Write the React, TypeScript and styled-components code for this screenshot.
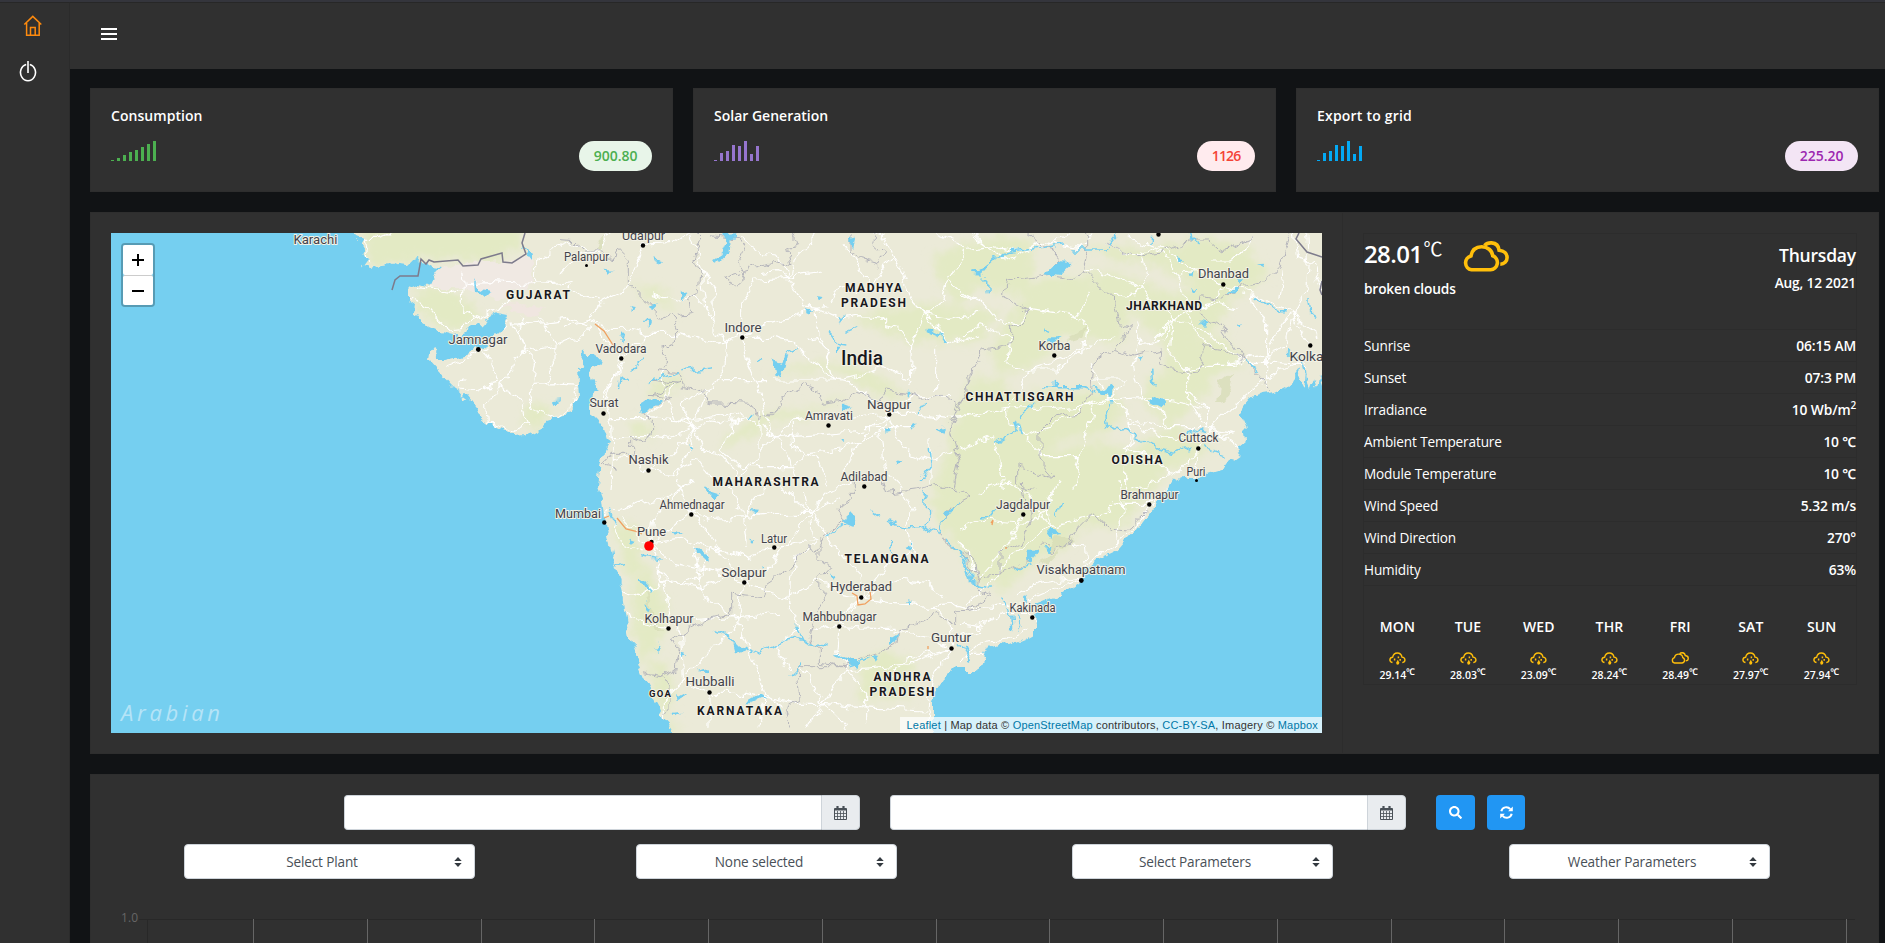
import React from "react";
import styled, { createGlobalStyle } from "styled-components";
import { FaSearch } from "react-icons/fa";

const GlobalStyle = createGlobalStyle`
  *, *::before, *::after { box-sizing: border-box; }
  body {
    margin: 0;
    background: #111315;
    color: #fff;
    font: 14px/20px "Open Sans", "Noto Sans", sans-serif;
    overflow: hidden;
  }
`;

const Page = styled.div`
  display: grid;
  grid-template-columns: 70px 1fr;
  height: 943px;
  overflow: hidden;
  border-top: 2px solid #34353c;
`;

const Sidebar = styled.nav`
  background: #303030;
  border-right: 1px solid #2b2b2b;
  border-top: 1px solid #272727;
  display: flex;
  flex-direction: column;
`;

const NavItem = styled.a<{ $indent: number; $gap: number }>`
  display: block;
  height: 22px;
  margin: ${(p) => p.$gap}px 0 0 ${(p) => p.$indent}px;
  svg { display: block; }
`;

const Main = styled.div`
  min-width: 0;
`;

const TopBar = styled.header`
  height: 67px;
  background: #303030;
  border-top: 1px solid #272727;
  padding: 25px 0 0 31px;
  svg { display: block; }
`;

const Content = styled.main`
  padding: 19px 6px 0 20px;
  display: flex;
  flex-direction: column;
  gap: 20px;
`;

const CardRow = styled.section`
  display: grid;
  grid-template-columns: repeat(3, 1fr);
  gap: 20px;
`;

const Card = styled.article`
  height: 104px;
  background: #303030;
  border: 1px solid #2e2e2e;
  padding: 17px 20px;
`;

const CardTitle = styled.h4<{ $tracking: number }>`
  margin: 0;
  font-size: 14px;
  font-weight: 600;
  line-height: 20px;
  letter-spacing: ${(p) => p.$tracking}px;
`;

const CardBody = styled.div`
  display: flex;
  justify-content: space-between;
  align-items: flex-start;
  margin-top: 15px;
`;

const Bars = styled.div<{ $color: string }>`
  display: flex;
  align-items: flex-end;
  gap: 3px;
  height: 20px;
  color: ${(p) => p.$color};
`;

const Bar = styled.i<{ $h: number }>`
  width: 3px;
  height: ${(p) => p.$h}px;
  background: currentColor;
`;

const Pill = styled.span<{ $bg: string; $fg: string; $tracking: number }>`
  height: 30px;
  line-height: 30px;
  padding: 0 14.5px;
  border-radius: 15px;
  background: ${(p) => p.$bg};
  color: ${(p) => p.$fg};
  font-weight: 600;
  font-size: 14px;
  letter-spacing: ${(p) => p.$tracking}px;
`;

const MapPanel = styled.section`
  display: grid;
  grid-template-columns: 1252px 1fr;
  height: 542px;
  background: #303030;
  border: 1px solid #2e2e2e;
`;

const MapColumn = styled.div`
  padding: 20px;
  border-right: 1px solid #2c2c2c;
`;

const MapFrame = styled.div`
  position: relative;
  width: 1211px;
  height: 500px;
  overflow: hidden;
  background: #75cff0;
  > svg { display: block; }
`;

const ZoomControl = styled.div`
  position: absolute;
  left: 10px;
  top: 10px;
  border: 2px solid rgba(0, 0, 0, 0.25);
  border-radius: 4px;
  background-clip: padding-box;
`;

const ZoomButton = styled.button`
  display: grid;
  place-items: center;
  width: 30px;
  height: 30px;
  padding: 0;
  border: 0;
  background: #fff;
  border-radius: 2px;
  & + & { border-top: 1px solid #ccc; }
`;

const Attribution = styled.div`
  position: absolute;
  right: 0;
  bottom: 0;
  height: 16px;
  width: 422px;
  padding: 0 4px;
  background: rgba(255, 255, 255, 0.7);
  color: #333;
  font: 11px/16px "Liberation Sans", Arial, sans-serif;
  letter-spacing: 0.19px;
  display: flex;
  justify-content: flex-end;
  white-space: pre;
  b { font-weight: 400; color: #0078a8; }
`;

const Weather = styled.div`
  padding: 20px 21px 0 20px;
`;

const WeatherTable = styled.div`
  border: 1px solid #2c2c2c;
  height: 452px;
`;

const Now = styled.div`
  display: flex;
  justify-content: space-between;
  height: 96px;
  border-bottom: 1px solid #2c2c2c;
`;

const NowTop = styled.div`
  display: flex;
  height: 45px;
  padding-top: 6px;
  svg { margin: 1px 0 0 20px; }
`;

const Temp = styled.span`
  font-size: 24px;
  font-weight: 600;
  line-height: 27px;
  letter-spacing: -0.6px;
`;

const TempUnit = styled.span`
  font-size: 19px;
  line-height: 15px;
  font-family: "Noto Sans CJK SC", sans-serif;
  margin-left: 1px;
`;

const Strong = styled.div`
  font-size: 13.7px;
  font-weight: 600;
  line-height: 20px;
  letter-spacing: -0.15px;
`;

const DateBox = styled.div`
  text-align: right;
  padding-top: 11px;
`;

const Weekday = styled.div`
  font-size: 17.5px;
  font-weight: 600;
  line-height: 20px;
  letter-spacing: -0.2px;
  margin-bottom: 8px;
`;

const Row = styled.div`
  display: flex;
  justify-content: space-between;
  height: 32px;
  line-height: 32px;
  font-size: 13.6px;
  letter-spacing: -0.14px;
  border-bottom: 1px solid #2c2c2c;
  strong { font-weight: 600; font-size: 13.8px; }
  sup { font-size: 10px; line-height: 0; }
`;

const Forecast = styled.div`
  display: grid;
  grid-template-columns: repeat(7, 1fr);
  padding-top: 31px;
  margin: 0 -1px 0 -2px;
`;

const Day = styled.div`
  display: flex;
  flex-direction: column;
  align-items: center;
  font-weight: 600;
  font-size: 14px;
  letter-spacing: 0.15px;
`;

const DayIcon = styled.div`
  height: 13px;
  margin-top: 15px;
  svg { display: block; }
`;

const DayTemp = styled.span`
  font-size: 10.5px;
  line-height: 14px;
  margin-top: 3px;
  letter-spacing: 0;
  white-space: nowrap;
  sup { font-size: 9px; line-height: 0; }
`;

const FilterPanel = styled.section`
  height: 300px;
  background: #303030;
  border: 1px solid #2e2e2e;
  padding-top: 20px;
`;

const DateRow = styled.div`
  display: flex;
  padding-left: 253px;
  height: 35px;
`;

const DateGroup = styled.div`
  display: flex;
  width: 516px;
  margin-right: 30px;
`;

const DateInput = styled.input`
  flex: 1;
  min-width: 0;
  border: 1px solid #ced4da;
  border-right: 0;
  border-radius: 4px 0 0 4px;
  background: #fff;
`;

const DateAddon = styled.span`
  display: grid;
  place-items: center;
  width: 39px;
  border: 1px solid #ced4da;
  border-radius: 0 4px 4px 0;
  background: #e9ecef;
`;

const ActionButton = styled.button<{ $w: number }>`
  display: grid;
  place-items: center;
  width: ${(p) => p.$w}px;
  height: 35px;
  padding: 0;
  margin-right: 12px;
  border: 0;
  border-radius: 4px;
  background: #2196f3;
  color: #fff;
`;

const SelectRow = styled.div`
  display: flex;
  margin-top: 14px;
  padding-left: 93px;
`;

const Select = styled.button<{ $w: number; $gap: number }>`
  display: flex;
  align-items: center;
  width: ${(p) => p.$w}px;
  height: 35px;
  margin-right: ${(p) => p.$gap}px;
  padding: 0 12px;
  border: 1px solid #ced4da;
  border-radius: 4px;
  background: #fff;
  color: #495057;
  font: 13.6px/20px "Open Sans", sans-serif;
  letter-spacing: -0.15px;
  span { flex: 1; text-align: center; padding-right: 7px; }
`;

const ChartArea = styled.div`
  margin: 30px 0 0 28px;
  svg { display: block; }
`;

const HomeIcon = () => (
  <svg width="20" height="22" viewBox="0 0 20 22" fill="none" stroke="#fd8a0e" strokeWidth="1.5">
    <path d="M1.3 9.5 9.8 1.4l8.5 8.1M3.600 8v12.300h12.600V8M7.500 20V12.600h4.700V20" />
  </svg>
);

const PowerIcon = () => (
  <svg width="18" height="22" viewBox="0 0 18 22" fill="none" stroke="#fff" strokeWidth="1.600">
    <path d="M9 0v12M7.200 3.400a7.500 8.300 0 1 0 3.600 0" />
  </svg>
);

const MenuIcon = () => (
  <svg width="16" height="13" viewBox="0 0 16 13" fill="#fff">
    <path d="M0 0h16v2H0zM0 5h16v2H0zM0 10h16v2H0z" />
  </svg>
);

const CloudsIcon = ({ size, weight }: { size: number; weight: number }) => (
  <svg width={size} height={(size * 31) / 47} viewBox="0 0 47 31" fill="none" stroke="#ffbf0b" strokeWidth={weight}>
    <path d="M9.500 28.800h19a7.300 7.300 0 0 0 2.200-14.100C30 9.500 25.700 5.700 19.700 5.700c-6 0-9.700 3.700-10.700 9.200A7.100 7.100 0 0 0 9.500 28.800z" />
    <path d="M22.500 4.600C24.500 2.400 26.500 1.700 29.600 1.900c4.400.4 7.100 3.300 7.500 7.300 5 .6 8 3.600 8 7.300s-2.900 6.700-6.800 6.700" />
  </svg>
);

const RainIcon = () => (
  <svg width="17" height="13" viewBox="0 0 17 13" fill="none" stroke="#ffbf0b" strokeWidth="1.400">
    <path d="M3.500 10.500C-.4 9.600.5 5.400 3.700 5.200 4.200 2.400 6 1 8.300 1c2.600 0 4.300 1.700 4.700 4.100 3.600.3 4.100 4.800.3 5.500" />
    <path d="M5.600 6.600v1.900M9.400 4.600v1.600M11.200 7v1.700" strokeWidth="1.500" />
    <path d="M8.800 7.800 7.200 10.500q-.2 2.200 1.600 2.200 1.700-.1 1.500-2.200z" fill="#ffbf0b" stroke="none" />
  </svg>
);

const CalendarIcon = () => (
  <svg width="13" height="14" viewBox="0 0 13 14" fill="none" stroke="#495057">
    <path d="M.5 2.500h12v11H.5z" />
    <path d="M.5 3.700h12" strokeWidth="1.600" />
    <path d="M3.500 5v8.500M6.500 5v8.500M9.500 5v8.500M.5 7.500h12M.5 10.500h12" strokeWidth=".8" />
    <path d="M3.500 0v4M9.500 0v4" strokeWidth="2.200" />
  </svg>
);

const RefreshIcon = () => (
  <svg width="13" height="13" viewBox="0 0 13 13" fill="none" stroke="#fff" strokeWidth="2">
    <path d="M1.300 5.200A5.100 5.100 0 0 1 10.300 3.200M11.700 7.800A5.100 5.100 0 0 1 2.700 9.800" />
    <path d="M12.800.6v4.700H8.100zM.2 12.400V7.700h4.700z" fill="#fff" stroke="none" />
  </svg>
);

const CaretIcon = () => (
  <svg width="8" height="10" viewBox="0 0 8 10" fill="#343a40">
    <path d="M4 0 7.700 4H.3zM4 10 .3 6h7.400z" />
  </svg>
);

type Label = [text: string, x: number, y: number, width: number, kind: "city" | "state" | "country"];

const labels: Label[] = [
  ["Karachi", 315.5, 243.5, 44, "city"],
  ["Udaipur", 643.5, 239.5, 43, "city"],
  ["Palanpur", 586.5, 260.5, 45, "city"],
  ["Jamnagar", 478, 343.5, 59, "city"],
  ["Vadodara", 621, 353, 51, "city"],
  ["Indore", 743, 331.5, 37, "city"],
  ["Surat", 604, 407, 29, "city"],
  ["Nashik", 648.5, 463.5, 40, "city"],
  ["Amravati", 829, 419.5, 48, "city"],
  ["Nagpur", 889, 408.5, 44, "city"],
  ["Adilabad", 864, 480.5, 47, "city"],
  ["Ahmednagar", 692, 509, 65, "city"],
  ["Mumbai", 578, 518, 46, "city"],
  ["Pune", 651.5, 535.5, 29, "city"],
  ["Latur", 774, 542.5, 26, "city"],
  ["Solapur", 744, 576.5, 45, "city"],
  ["Hyderabad", 861, 591, 62, "city"],
  ["Mahbubnagar", 839.5, 621, 74, "city"],
  ["Kolhapur", 669, 623, 49, "city"],
  ["Hubballi", 710, 686, 49, "city"],
  ["Guntur", 951, 641.5, 40, "city"],
  ["Kakinada", 1032.5, 612, 46, "city"],
  ["Visakhapatnam", 1081, 573.5, 89, "city"],
  ["Jagdalpur", 1023, 509, 54, "city"],
  ["Brahmapur", 1149.5, 499, 58, "city"],
  ["Puri", 1196, 475.5, 19, "city"],
  ["Cuttack", 1198.5, 442, 40, "city"],
  ["Korba", 1054.5, 350, 32, "city"],
  ["Dhanbad", 1223.5, 278, 51, "city"],
  ["Kolkata", 1312.5, 360.5, 46, "city"],
  ["GUJARAT", 538, 298.5, 64, "state"],
  ["MADHYA", 873.5, 292, 57, "state"],
  ["PRADESH", 873.5, 307, 65, "state"],
  ["MAHARASHTRA", 765.5, 486, 106, "state"],
  ["TELANGANA", 886.5, 563, 84, "state"],
  ["ANDHRA", 902, 681, 57, "state"],
  ["PRADESH", 902, 696, 65, "state"],
  ["KARNATAKA", 739.5, 715, 85, "state"],
  ["GOA", 660, 697, 22, "state"],
  ["CHHATTISGARH", 1019.5, 400.5, 108, "state"],
  ["JHARKHAND", 1164, 309.5, 76, "state"],
  ["ODISHA", 1137, 463.5, 51, "state"],
  ["India", 862, 364.5, 42, "country"],
];

const cities: [number, number, number?][] = [
  [586.5, 265.5, 1.5], [643, 245.5], [478.3, 349.5, 2.4], [621.3, 358.5], [742.3, 337.5],
  [603.5, 413.5], [648.5, 470.5], [828.5, 425.5], [889.3, 414.5], [864.3, 486.5],
  [691.3, 514.5], [604.3, 522.5], [651.5, 542], [774.3, 547.5], [744.3, 582.5],
  [861.3, 597.5], [839.3, 626.5], [668.5, 628.5], [709.5, 692.5], [951.5, 648.5],
  [1032.3, 617.5], [1081.3, 580.5, 2.4], [1023.3, 514.5], [1149.3, 504.5],
  [1196.5, 480.5, 1.5], [1198.3, 448.5], [1054.3, 355.5], [1223.3, 284.5],
  [1310.3, 345.5], [1158.5, 234.5],
];

const LAND =
  "M353 215V233L363 237 358 243 364 253 367 259 361 267 370 269 376 265 387 263 393 266 400 262 407 263 412 258 417 257 421 262 428 263 434 267 441 268 438 275 434 279 431 286 420 283 413 286 408 291 408 300 415 305 414 312 420 320 428 327 440 332 453 335 463 333 470 330 478 327 483 323 487 317 497 313 508 315 504 323 502 330 494 338 483 346 475 350 470 353 457 357 445 360 439 360 436 353 432 350 429 354 428 360 437 370 453 387 462 393 477 412 487 421 497 428 513 435 522 434 530 431 543 424 550 422 561 415 570 412 575 402 579 397 578 384 577 371 582 363 583 350 587 355 597 355 602 363 592 367 591 377 595 387 600 391 594 395 593 405 591 413 597 419 603 427 608 443 603 453 600 467 598 487 603 500 605 517 608 533 612 553 618 573 623 593 628 627 632 647 640 668 648 687 657 703 663 717 670 725 675 733V745H933V700L936 690 944 677 953 668 967 668V674H975L976 668 980 663 985 651 998 645 1010 646 1025 640 1036 634V623L1032 613 1035 605 1060 595 1078 583 1087 570 1098 560 1118 551 1137 530 1152 510 1167 490 1173 479 1182 475 1188 478 1200 478 1220 472 1229 460 1239 453 1238 447 1248 438 1246 426 1241 414 1243 407 1251 398 1263 394 1277 392 1287 387 1293 382 1302 370 1300 382 1304 390 1306 371 1310 390 1314 378 1317 388 1319 376 1323 388H1335V215Z";

const GREENS =
  "M364 225H520L521 251 505 252 494 263 470 260 420 258 400 262 366 265ZM415 290L445 288 468 301 480 318 464 330 435 326 417 309ZM522 425L528 405 542 404 557 413 532 429ZM630 284L658 287 681 313 656 302ZM648 385L682 373 679 389 650 397ZM631 420L650 424 655 438 631 434ZM650 660L666 662 675 690 667 733H682L655 701ZM630 590L647 565 667 603 660 643 640 667ZM612 520L635 526 643 570 627 580ZM718 450Q747 405 820 408 820 400 847 395L809 418 775 421 741 441ZM767 373Q800 360 860 365L910 398 888 400 836 371ZM853 320Q908 294 975 310L1000 310 980 342 912 343ZM930 258Q987 228 1032 241L1032 301 983 286 954 306ZM971 378L1003 380 1022 410 985 443 952 477 950 510 933 485 949 450 957 411ZM1032 285Q1082 260 1132 303L1119 345 1062 335 1040 362 1001 377 988 350ZM1084 270L1118 272 1174 295 1215 280 1234 298 1214 332 1168 350 1120 300ZM1170 345L1225 335 1243 365 1205 375 1165 371ZM1150 377L1180 370 1225 364 1200 400 1172 427 1140 400ZM1024 470Q1080 428 1132 450L1170 425 1214 450 1172 468 1120 527 1080 527 1065 551 1032 560 1007 590 974 581 962 540 981 487ZM928 498L975 480 1025 495 1062 477 1058 514 1033 566 1006 577 980 574 948 537ZM862 661L883 650 913 662 911 699 858 701ZM1087 244L1151 249 1209 237 1253 253 1270 275 1240 295 1192 285 1158 266 1110 260ZM948 430L990 404 1040 390 1110 390 1125 408 1110 434 1060 440 1040 465 1005 505 955 520Z";

const MapArt = () => (
  <svg width="1211" height="500" viewBox="111 233 1211 500">
    <defs>
      <clipPath id="land"><path d={LAND} /></clipPath>
      <filter id="soft"><feGaussianBlur stdDeviation="4" /></filter>
      <filter id="jagged" filterUnits="userSpaceOnUse" x="100" y="215" width="1240" height="535" colorInterpolationFilters="sRGB">
        <feTurbulence type="fractalNoise" baseFrequency="0.075" numOctaves="3" seed="4" result="noise" />
        <feDisplacementMap in="SourceGraphic" in2="noise" scale="13" xChannelSelector="R" yChannelSelector="G" />
      </filter>
    </defs>
    <g filter="url(#jagged)">
      <path d={LAND} fill="#ebead8" />
      <g clipPath="url(#land)">
        <path d={GREENS} fill="#e3eac4" filter="url(#soft)" />
        <path d="M441 270 470 262 532 258 534 284 500 300 460 287 430 287Z" fill="#f0e9e3" />
        <path d="M505 304 545 307 540 315 510 312Z" fill="#f0e6e0" />
        <g fill="#d5dbb5" opacity=".7">
          <path d="M598 240 606 239 601 250 595 249ZM1220 385 1234 373 1227 399 1218 403ZM1056 533 1075 539 1061 551 1047 552ZM1040 560 1060 552 1045 568ZM643 590 651 604 660 632 655 632ZM1075 333 1090 326 1084 339 1068 344ZM970 580 985 574 979 584Z" />
        </g>

        <g fill="none" stroke="#fff" strokeWidth="3.4" strokeLinejoin="round">
          <g transform="translate(100 220) scale(.33333)">
            <path d="M790 52H845L880 38M790 52 800 130M960 200 1000 205 1050 215 1085 210M925 235 965 250 1000 290 1045 330 1090 325 1135 295 1195 265 1250 230M1085 155 1090 190 1085 270 1135 295M1090 188 1180 185 1260 190 1310 188 1360 190 1420 185 1410 205 1450 230 1500 240M1310 188 1310 130 1360 90 1410 70 1500 100M1235 300 1275 395 1240 410 1235 450 1200 500 1160 550 1165 600 1195 625M1235 305 1310 310 1400 298 1465 315M1275 395 1370 375 1440 350 1470 320M1275 395 1310 425 1300 490 1285 520 1300 570 1370 595 1420 550 1430 495M1040 440 1090 420 1145 388 1175 425 1195 490 1150 500 1120 515 1080 510 1085 480 1100 480M1145 388 1160 380 1200 330 1225 300M1270 290 1250 335 1280 400M1300 490 1365 488 1430 493M1365 375 1365 430 1335 488M1200 500 1260 530 1275 590 1290 620M1320 290 1340 330 1370 375M1165 600 1230 635 1290 610" />
          </g>
          <g transform="translate(560 220) scale(.33333)">
            <path d="M0 165 60 100 120 90 150 40M90 300 0 325M90 300 130 240 210 200 250 75 340 70 380 40M90 300 150 325 195 325 260 340 350 340 480 370M95 300 140 365 180 400 185 415 155 490 130 570M185 415 230 370 260 340M385 40 390 60 405 80 430 160 440 260 465 310 465 330 500 365 545 350 595 320 690 295 770 265 800 260M270 220 360 240 400 230 440 265M545 352 545 250 590 180 690 175 720 160 790 150M545 352 560 420 600 510 620 590 645 650M545 355 640 355 700 370 760 430 820 480M470 370 500 365 495 440 460 500 430 540 400 620 380 700 345 780M465 310 460 200 430 160M600 160 650 155 690 175 730 260 770 265M690 175 650 105 600 100 540 50M690 175 700 120 770 40M855 70 890 130 935 195 970 140 1000 110 975 60 935 40M1000 110 1030 160 1055 240 1095 285 1140 250 1165 180 1220 110 1180 60 1130 40M1165 180 1210 220 1260 240M1095 285 1170 295 1260 280M935 195 890 220 840 190 810 250M980 295 980 320 1020 330 1055 370 1050 500M980 295 900 290 845 300 770 265M1055 370 1095 290M1095 285 1140 330 1165 375 1210 360 1260 345M1130 380 1130 510M480 485 615 485M645 480 820 480 905 465 970 440 1055 480M820 480 870 490 940 540 985 580 1060 530 1170 520M820 480 800 400 770 350 740 355M770 265 780 340 820 480M155 490 130 540 155 620 160 720 150 810M155 490 190 425M145 590 260 590 400 600 510 580 575 600 640 640M260 590 320 530 345 500M400 620 360 555 390 530 450 510M400 620 340 590 310 500 310 450M400 620 450 600 520 610 570 590M150 650 260 650 310 655 400 620M265 750 320 720 380 660 400 620M265 750 190 710 160 720M265 750 330 760 410 720 460 790 520 810M400 620 430 690 490 710 540 770 600 700 650 650 700 600 780 590 840 600 985 582M510 580 520 640 480 690 540 740 600 740 700 740 750 700 850 690 960 640M640 650 690 710 710 790M600 570 600 690M640 650 800 640 920 630M700 600 700 680 770 720 800 790M985 580 940 620 880 690 850 770M985 580 1060 580 1170 595 1260 590M985 580 960 650 970 740 1030 800M985 580 1030 690 1110 720 1180 690M1110 660 1110 790M915 620 1060 620" />
          </g>
          <g transform="translate(960 220) scale(.33333)">
            <path d="M0 90 90 80 180 95 250 65 360 85 400 40M0 220 70 250 110 300 170 310 210 265 300 280 345 290 380 250 395 210M90 85 40 40M40 50 90 85 140 120 210 90 280 65 330 40M370 145 440 160 540 200 640 300 740 330 850 430M430 65 520 110 600 80 700 150 790 195 880 220 990 280 1050 375M790 195 740 260 690 270 640 300 580 360M690 270 760 250 840 270M545 90 560 160 530 220 460 230M500 50 600 90 650 165 680 250 700 330 760 390M650 165 730 160 790 195M880 40 860 90 810 120 750 120M1040 40 1045 120 1040 210 1000 280 980 380 930 400 800 430M990 280 940 350 920 410 920 510M860 430 950 430 1040 440M990 280 1080 350M1000 40 1010 120 1060 130 1085 210M970 150 960 240M880 220 885 260 920 310 920 400M0 350 60 320 150 350 140 430 200 450 290 450 370 385 460 350M345 290 390 320 385 370 300 420 210 450 145 560M145 565 60 580 0 590M145 565 260 570 380 560 450 540 530 530 640 540 740 570M145 565 150 610 195 645 330 590 400 545 455 535 500 480 390 480M195 650 250 710 360 710 390 610 400 555M360 710 345 800M0 690 100 650M100 650 120 730 130 810M450 540 520 600 600 620 690 620 755 620 830 550 890 500 950 450 1040 430M450 540 390 430M500 600 600 650 700 660 830 640M500 600 520 660 490 685 560 700 640 770M515 640 500 700 500 810M540 360 520 440 540 530 610 580 620 620M640 300 630 400 680 450 740 430 830 430M680 450 680 530 750 630 820 640M530 310 545 370 610 360 640 300M740 570 680 510M740 570 740 620M715 685 755 620M715 690 650 760 520 810M715 685 705 770M755 620 840 690 840 700" />
          </g>
          <g transform="translate(560 480) scale(.33333)">
            <path d="M135 100 180 90 240 70 300 60 350 30 400 0M180 110 240 170 275 190 370 180 450 200 560 230 650 200 770 180M275 190 300 270 330 400 365 460 370 600 450 640 560 640 700 670M275 190 340 250 450 270 550 305 630 260 680 190 750 100 740 30M275 190 280 120 345 40 400 0M395 100 450 120 550 110 640 100 750 100 840 50M395 100 440 150 480 210 550 305M395 100 340 140 275 190M395 100 350 0M550 305 530 420 590 560 610 640 670 680M550 305 680 355 720 440 650 500 690 570M450 200 420 290 340 310 290 260M160 120 190 200 250 220M160 330 230 350 320 300 430 320 520 280M325 445 210 420 200 390M325 445 370 420 530 410 660 400M530 415 430 350 400 200M530 430 460 510 375 590M680 355 770 300 850 340 900 350 1000 370 1120 380 1190 370 1260 390M905 350 970 270 1060 210 1040 140 1060 90 1020 20M905 350 840 430 750 450M838 440 930 445 1010 445M838 440 830 510 860 570 920 640 920 730M905 350 900 290 820 200 760 100M905 350 1010 300 1100 310 1160 350M905 350 850 400 850 430M1120 380 1170 420 1175 505 1060 550 860 570 790 670 740 740M1175 505 1040 540 980 600M1175 505 1110 470 1000 450M1175 505 1200 470 1260 450M1175 505 1110 610 1100 740M700 670 790 670 900 680 1100 690M610 640 600 740M450 640 450 740M370 600 310 660 310 720M790 670 760 620 720 560M790 670 860 740M750 100 800 40 880 0M750 100 700 60 640 0M750 100 760 190 700 240 690 360M550 110 500 0M640 0 550 110 560 200" />
          </g>
          <g transform="translate(960 480) scale(.33333)">
            <path d="M145 0 200 40 265 140 340 120 420 100 480 70 570 70M265 140 260 70 300 0M265 140 190 200 130 250 110 295 10 375M0 150 60 120 200 130 260 100M190 105 130 210 60 290M0 375 130 380 190 370 280 330 365 290 380 250 460 200 530 140 560 90 640 10M165 350 240 310 300 300 365 290M0 430 60 440 130 400 200 400 225 425M0 540 50 490 140 480 210 450M0 190 40 250 50 290M340 185 370 200 375 250M470 200 465 150 490 100 480 0M55 40 150 0M10 520 70 520" />
          </g>
        </g>

        <g fill="none" stroke="#b4b4bb" strokeWidth="3" strokeLinejoin="round">
          <path transform="translate(560 220) scale(.33333)" d="M0 62 40 65 70 90 130 90 160 120 175 90 205 120 205 190 240 220 270 250 310 290 330 285 350 330 345 370 300 385 320 420 300 450 355 455 370 500 430 515 450 545 580 550 590 595 630 590 665 530 740 495 775 510 780 550 830 545 895 520 960 540 980 510 1040 520 1080 535 1150 520 1195 560 1225 520 1220 470 1260 430M400 40 420 60 400 120 425 160 420 220 380 240 390 280 345 290M455 50 535 60 550 90 530 130 555 170 525 195 495 175 590 140 640 125 690 140 680 80 710 70 700 40M870 40 870 90 895 120 950 135 975 100 940 70 950 40M270 480 360 490 270 520 335 530 250 570 285 620 260 670 215 650 215 700 150 700 130 735 180 745M1195 560 1170 630 1200 720 1180 810" />
          <path transform="translate(960 220) scale(.33333)" d="M200 40 240 75 290 90 285 160 140 180 130 230 210 270 180 310 155 320 155 370 70 390 30 470 0 570M380 40 380 100 370 150 345 180 285 170M370 150 420 200 460 240 480 310 515 320 460 385 400 430 390 520 360 580 280 590 240 630 240 720 285 770 170 740 170 790 220 810M430 65 480 90 530 110 600 100 690 60 740 60 780 95 870 60 880 40M990 40 960 140 920 180 850 200 780 240 720 230 715 280 790 330 850 420 900 470 935 510M460 385 520 405 605 390 600 440 640 450 710 460 735 380 790 390 850 420" />
          <path transform="translate(560 480) scale(.33333)" d="M965 0 980 40 1060 30 1140 10 1230 50 1170 80 1140 150 1160 190 1215 230 1260 300M880 0 880 50 830 90 850 120 790 170 770 210 740 200 680 270 620 310 610 350 515 340 515 400 430 420 340 470 360 520 350 570 300 590 255 580M780 170 780 240 815 260 770 310 800 340 770 390 750 480 775 500 775 550 850 560 1010 500 1015 460 1120 400 1190 430 1190 390 1260 380M310 590 330 620 330 690 310 700M845 560 710 560 720 660 675 690 690 740" />
          <path transform="translate(960 480) scale(.33333)" d="M190 0 195 50 215 110 180 190 120 220 120 285 65 290 55 330 90 350 0 390M0 215 45 240 50 290M120 285 190 250 260 180 275 220 330 190 350 150 405 95 450 145 500 150 560 95" />
        </g>
        <g fill="none" stroke="#75cff0" strokeWidth="4.500">
          <path transform="translate(560 220) scale(.33333)" d="M260 485 355 455M370 455 455 443M220 460 235 430 255 420M175 495 180 470 200 480M590 425 610 415M670 430 680 395 710 385M810 340 830 370 865 375M850 340 895 320M1070 580 1095 545M1080 785 1110 740 1105 690M1140 340 1160 368M185 375 192 347M560 595 580 580" />
          <path transform="translate(960 220) scale(.33333)" d="M35 155 90 135 130 100 260 80 315 75M340 90 435 90 475 40M60 165 80 185 82 220M250 500 370 500 400 510M283 500 283 470M180 600 195 570 215 545M105 670 155 640 170 615 178 640M455 540 435 590 440 620 465 630 500 625 520 650 600 690 640 700 685 685M730 685 790 705M675 640 700 625 735 635M890 230 950 275 975 275M855 425 900 460M1050 240 1055 280 1070 290M575 455 578 490 590 495M680 40 725 75M570 75 572 50M250 330 270 340M985 390 1030 430 1035 460" />
          <path transform="translate(560 480) scale(.33333)" d="M465 460 540 495 600 520 640 500 700 470 750 485 800 495M710 440 730 480M800 170 860 125M990 120 1030 140 1090 140 1105 130 1100 50 1085 30M1090 140 1140 160 1155 110 1190 65M1160 180 1215 235 1235 310 1260 315M830 520 870 560 950 535M690 585 725 550M165 265 195 250M985 195 1000 220M1210 490 1235 545M250 230 305 240M930 90 960 110M150 90 165 130" />
          <path transform="translate(960 480) scale(.33333)" d="M0 230 35 270 35 310 90 325M60 110 85 110 105 85M290 110 305 60M155 270 215 250M130 350 150 390 155 445M165 410 185 445M0 490 35 540M200 240 230 210" />
        </g>
        <g fill="#75cff0">
          <path transform="translate(560 220) scale(.33333)" d="M480 43 520 40 515 90 480 130 460 120 490 100 505 65ZM630 415 665 425 685 400 675 450 650 470 645 440ZM365 215 380 210 370 240ZM240 560 265 540 305 535 265 575 238 578ZM250 305 270 305 265 320ZM283 118 300 123 290 134ZM130 152 158 155 145 167ZM265 260 300 250 280 270ZM208 258 228 262 217 272ZM865 45 885 60 878 88ZM1100 320 1120 320 1120 340 1150 350 1135 355 1100 340ZM825 380 845 380 825 405ZM765 232 782 233 770 250ZM835 292 855 293 843 308ZM743 268 760 272 750 282ZM1133 625 1152 620 1142 640ZM1050 622 1070 613 1060 630ZM978 615 990 624 980 640ZM376 672 395 680 385 692ZM1008 718 1024 722 1013 737ZM843 653 860 662 850 672ZM845 550 868 558 850 572ZM1043 513 1052 522 1043 535ZM1230 155 1260 145V158Z" />
          <path transform="translate(960 220) scale(.33333)" d="M265 160 290 130 335 132 300 165ZM35 155 90 135 85 150ZM255 355 300 355 275 370ZM395 495 430 510 460 500 455 535 420 520ZM570 545 590 528 615 540 605 565ZM720 300 748 305 738 315ZM815 315 840 310 830 322ZM530 408 552 412 545 422ZM650 108 672 115 660 122ZM900 133 917 131 910 149ZM825 178 852 178 843 197ZM795 220 830 205 835 215ZM690 168 704 164 700 180ZM693 196 712 199 703 212ZM640 790 665 765 675 775 650 810H620Z" />
          <path transform="translate(560 480) scale(.33333)" d="M432 25 480 40 465 58ZM568 93 597 95 590 105ZM400 210 420 215 455 235 455 248 420 232ZM240 285 265 310 265 345 250 320ZM255 370 275 380 265 387ZM208 176 228 183 215 192ZM343 146 364 160 350 164ZM570 173 592 178 582 185ZM520 490 555 495 545 510 527 515ZM610 245 625 260 612 257ZM990 470 1015 455 1005 498 990 500ZM830 525 870 540 900 540 900 560 870 555ZM943 525 962 528 950 545ZM845 120 870 103 888 120 880 135ZM808 272 833 290 825 300ZM558 670 600 645 615 655 580 670ZM345 643 372 655 350 667ZM365 520 385 525 370 537ZM405 576 447 568 447 580ZM338 702 367 698 348 712ZM278 500 300 497 290 509ZM1035 205 1058 193 1050 210ZM1038 363 1052 370 1045 377Z" />
          <path transform="translate(960 480) scale(.33333)" d="M265 145 303 155 280 160 283 170 265 165ZM255 195 275 195 270 215 260 215ZM210 215 230 215 205 248ZM185 358 204 350 195 365Z" />
          <path d="M486 317 497 313 506 315 501 323 490 328 484 322ZM472 278 478 290 492 293 485 300 473 290ZM523 245 533 255 532 262 525 253ZM553 400 563 399 555 404Z" />
        </g>
      </g>
    </g>
    <g fill="none" stroke="#7d7b8c" strokeWidth="1.500">
      <path d="M392 290 395 280 400 276 418 276 421 259 426 264 429 260 434 262 458 260 463 266 478 265 481 259 502 253 503 262 512 263 526 254 522 243 525 233M1299 233 1296 239 1307 252 1322 257" />
      <path d="M1322 281 1320 290 1322 295" />
    </g>
    <g fill="none" stroke="#f0a060" strokeWidth="1.300">
      <path d="M595 324 604 331 613 345M617 518 626 529 635 531 642 534M852 593 857 596 858 605 865 604 871 599 870 591M604 518 609 516M991 523 993 520 992 525M928 646V649M1006 549V547" />
    </g>
    {cities.map(([x, y, r = 2.2], i) => <circle key={i} cx={x} cy={y} r={r} fill="#000" />)}
    <circle cx="649" cy="546" r="4.800" fill="#f00" />
    {labels.map(([text, x, y, w, kind], i) => (
      <text
        key={i}
        x={x}
        y={y}
        textAnchor="middle"
        textLength={w}
        lengthAdjust={kind === "state" ? "spacing" : "spacingAndGlyphs"}
        fontFamily="Roboto, sans-serif"
        fontSize={kind === "country" ? 20 : kind === "state" ? (w < 25 ? 9.5 : 12) : w / text.length < 5.9 ? 12.5 : 13.5}
        fontWeight={kind === "state" ? 700 : kind === "country" ? 500 : 400}
        fill={kind === "city" ? "#43434b" : "#18181d"}
        stroke="#f3f2e6"
        strokeWidth="2"
        strokeLinejoin="round"
        paintOrder="stroke"
      >
        {text}
      </text>
    ))}
    <text x="121" y="721" textLength="99" fontFamily="Open Sans, sans-serif" fontStyle="italic" fontSize="22" fill="#b5e4f7">Arabian</text>
  </svg>
);

const stats = [
  { title: "Consumption", tracking: 0.05, bars: [1, 3, 6, 9, 11, 14, 17, 20], color: "#4caf50", value: "900.80", valueTracking: 0, bg: "#e8f5e9", fg: "#4caf50" },
  { title: "Solar Generation", tracking: 0, bars: [1, 8, 10, 16, 15, 20, 7, 15], color: "#9675ce", value: "1126", valueTracking: -0.8, bg: "#ffebee", fg: "#f44336" },
  { title: "Export to grid", tracking: 0.2, bars: [1, 8, 10, 16, 15, 20, 7, 15], color: "#03a9f4", value: "225.20", valueTracking: 0, bg: "#f3e5f5", fg: "#9c27b0" },
];

const readings: [string, React.ReactNode][] = [
  ["Sunrise", "06:15 AM"],
  ["Sunset", "07:3 PM"],
  ["Irradiance", <>10 Wb/m<sup>2</sup></>],
  ["Ambient Temperature", "10 ℃"],
  ["Module Temperature", "10 ℃"],
  ["Wind Speed", "5.32 m/s"],
  ["Wind Direction", "270°"],
  ["Humidity", "63%"],
];

const forecast = [
  ["MON", "29.14"], ["TUE", "28.03"], ["WED", "23.09"], ["THR", "28.24"], ["FRI", "28.49"], ["SAT", "27.97"], ["SUN", "27.94"],
];

const selects: [string, number, number][] = [
  ["Select Plant", 291, 161],
  ["None selected", 261, 175],
  ["Select Parameters", 261, 176],
  ["Weather Parameters", 261, 0],
];

const gridLines = Array.from({ length: 15 }, (_, i) => Math.round(134 + i * 113.75) + 0.5);

export default function App() {
  return (
    <>
      <GlobalStyle />
      <Page>
        <Sidebar>
          <NavItem $indent={23} $gap={12}><HomeIcon /></NavItem>
          <NavItem $indent={19} $gap={24}><PowerIcon /></NavItem>
        </Sidebar>
        <Main>
          <TopBar><MenuIcon /></TopBar>
          <Content>
            <CardRow>
              {stats.map((s) => (
                <Card key={s.title}>
                  <CardTitle $tracking={s.tracking}>{s.title}</CardTitle>
                  <CardBody>
                    <Bars $color={s.color}>{s.bars.map((h, i) => <Bar key={i} $h={h} />)}</Bars>
                    <Pill $bg={s.bg} $fg={s.fg} $tracking={s.valueTracking}>{s.value}</Pill>
                  </CardBody>
                </Card>
              ))}
            </CardRow>
            <MapPanel>
              <MapColumn>
                <MapFrame>
                  <MapArt />
                  <ZoomControl>
                    <ZoomButton aria-label="Zoom in">
                      <svg width="12" height="12" viewBox="0 0 12 12"><path d="M0 5h5V0h2v5h5v2H7v5H5V7H0z" /></svg>
                    </ZoomButton>
                    <ZoomButton aria-label="Zoom out">
                      <svg width="12" height="2" viewBox="0 0 12 2"><path d="M0 0h12v2H0z" /></svg>
                    </ZoomButton>
                  </ZoomControl>
                  <Attribution>
                    <b>Leaflet</b> | Map data © <b>OpenStreetMap</b> contributors, <b>CC-BY-SA</b>, Imagery © <b>Mapbox</b>
                  </Attribution>
                </MapFrame>
              </MapColumn>
              <Weather>
                <WeatherTable>
                  <Now>
                    <div>
                      <NowTop>
                        <Temp>28.01</Temp>
                        <TempUnit>℃</TempUnit>
                        <CloudsIcon size={47} weight={3.6} />
                      </NowTop>
                      <Strong>broken clouds</Strong>
                    </div>
                    <DateBox>
                      <Weekday>Thursday</Weekday>
                      <Strong>Aug, 12 2021</Strong>
                    </DateBox>
                  </Now>
                  {readings.map(([name, value]) => (
                    <Row key={name}><span>{name}</span><strong>{value}</strong></Row>
                  ))}
                  <Forecast>
                    {forecast.map(([day, temp]) => (
                      <Day key={day}>
                        {day}
                        <DayIcon>{day === "FRI" ? <CloudsIcon size={18} weight={3.6} /> : <RainIcon />}</DayIcon>
                        <DayTemp>{temp}<sup>℃</sup></DayTemp>
                      </Day>
                    ))}
                  </Forecast>
                </WeatherTable>
              </Weather>
            </MapPanel>
            <FilterPanel>
              <DateRow>
                <DateGroup><DateInput /><DateAddon><CalendarIcon /></DateAddon></DateGroup>
                <DateGroup><DateInput /><DateAddon><CalendarIcon /></DateAddon></DateGroup>
                <ActionButton $w={39} aria-label="Search"><FaSearch size={13} /></ActionButton>
                <ActionButton $w={38} aria-label="Refresh"><RefreshIcon /></ActionButton>
              </DateRow>
              <SelectRow>
                {selects.map(([text, w, gap]) => (
                  <Select key={text} $w={w} $gap={gap}><span>{text}</span><CaretIcon /></Select>
                ))}
              </SelectRow>
              <ChartArea>
                <svg width="1750" height="40" viewBox="0 0 1750 40">
                  <text x="2" y="13" textLength="17" fontFamily="Open Sans, sans-serif" fontSize="12" fill="#666">1.0</text>
                  <path d="M20 10.500H1736M28.500 10V40" stroke="#282828" />
                  {gridLines.map((x) => <path key={x} d={`M${x} 10V40`} stroke="#666" />)}
                </svg>
              </ChartArea>
            </FilterPanel>
          </Content>
        </Main>
      </Page>
    </>
  );
}
